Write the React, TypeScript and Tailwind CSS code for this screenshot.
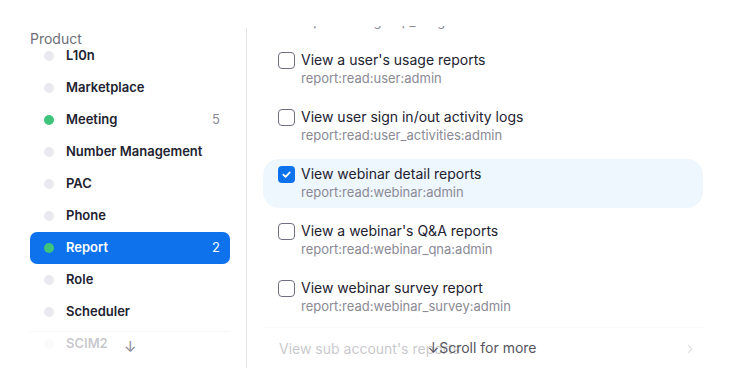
import React from "react";

const sidebarItems: { label: string; active?: boolean; count?: number; selected?: boolean }[] = [
  { label: "L10n" },
  { label: "Marketplace" },
  { label: "Meeting", active: true, count: 5 },
  { label: "Number Management" },
  { label: "PAC" },
  { label: "Phone" },
  { label: "Report", active: true, count: 2, selected: true },
  { label: "Role" },
  { label: "Scheduler" },
  { label: "SCIM2" },
];

const perms: { title: string; scope: string; checked?: boolean }[] = [
  { title: "View a user's operation logs report", scope: "report:read:group_usage:admin" },
  { title: "View a user's usage reports", scope: "report:read:user:admin" },
  { title: "View user sign in/out activity logs", scope: "report:read:user_activities:admin" },
  { title: "View webinar detail reports", scope: "report:read:webinar:admin", checked: true },
  { title: "View a webinar's Q&A reports", scope: "report:read:webinar_qna:admin" },
  { title: "View webinar survey report", scope: "report:read:webinar_survey:admin" },
];

function Checkbox({ checked }: { checked?: boolean }) {
  if (checked) {
    return (
      <div className="w-[17px] h-[17px] rounded-[4px] bg-[#0e72ed] flex items-center justify-center shrink-0 mt-[1px]">
        <svg width="11" height="11" viewBox="0 0 12 12" fill="none">
          <path d="M2.5 6.2 L5 8.6 L9.6 3.6" stroke="white" strokeWidth="1.9" strokeLinecap="round" strokeLinejoin="round" />
        </svg>
      </div>
    );
  }
  return <div className="w-[17px] h-[17px] rounded-[4px] border-[1.5px] border-[#6e7080] bg-white shrink-0 mt-[1px]" />;
}

export default function App() {
  return (
    <div
      className="w-[735px] h-[390px] bg-white flex overflow-hidden relative"
      style={{ fontFamily: "Inter, 'Noto Sans', sans-serif" }}
    >
      {/* Sidebar */}
      <div className="w-[246px] shrink-0 pt-[30px] pl-[30px] pr-[16px] relative flex flex-col">
        <div className="text-[14px] leading-[17px] text-[#6e6e7a] relative z-10">Product</div>
        <div className="h-[322px] overflow-hidden -mt-[7px] flex flex-col shrink-0">
          {sidebarItems.map((it) => (
            <div
              key={it.label}
              className={
                "h-[32px] shrink-0 flex items-center pl-[14px] pr-[10px] rounded-[7px] " +
                (it.selected ? "bg-[#0e72ed] text-white" : "text-[#222230]")
              }
            >
              <span
                className={
                  "w-[10px] h-[10px] rounded-full shrink-0 " +
                  (it.active ? "bg-[#3ec47b]" : "bg-[#e9e9ef]")
                }
              />
              <span className="ml-[12px] text-[13px] font-semibold flex-1">{it.label}</span>
              {it.count !== undefined && (
                <span className={"text-[13px] " + (it.selected ? "text-white" : "text-[#8a8a95]")}>{it.count}</span>
              )}
            </div>
          ))}
        </div>
        {/* fade */}
        <div className="absolute left-[30px] right-[16px] top-[331px] h-[40px] bg-white/75 border-t border-[#f7f7f9] flex justify-start">
          <span className="ml-[94px] mt-[5px] text-[15px] text-[#8a8a95] leading-[20px]">↓</span>
        </div>
      </div>

      {/* Divider */}
      <div className="w-px bg-[#e4e4e8] mt-[28px] h-[340px] shrink-0" />

      {/* Right */}
      <div className="flex-1 pl-[16px] pr-[32px] pt-[26px] relative flex flex-col">
        <div className="h-[344px] overflow-hidden flex flex-col shrink-0">
          <div className="-mt-[38px] flex flex-col gap-[8px] shrink-0">
            {perms.map((p) => (
              <div
                key={p.scope}
                className={
                  "h-[49px] shrink-0 rounded-[16px] pl-[15px] pt-[6px] flex gap-[6px] " +
                  (p.checked ? "bg-[#eef6fe]" : "")
                }
              >
                <Checkbox checked={p.checked} />
                <div className="flex flex-col">
                  <span className="text-[14px] leading-[18px] text-[#222230]">{p.title}</span>
                  <span className="text-[13px] leading-[18px] text-[#8a8a95]">{p.scope}</span>
                </div>
              </div>
            ))}
            <div className="h-[42px] shrink-0 border-t border-[#ececf0] flex items-center pl-[16px] pr-[8px] -mt-[3px]">
              <span className="text-[14px] text-[#222230] flex-1">View sub account's reports</span>
              <svg width="10" height="10" viewBox="0 0 10 10" fill="none">
                <path d="M3.5 1.5 L7 5 L3.5 8.5" stroke="#888" strokeWidth="1.2" strokeLinecap="round" />
              </svg>
            </div>
          </div>
        </div>
        {/* fade overlay */}
        <div className="absolute left-[16px] right-[32px] top-[326px] h-[45px] bg-white/75 flex items-start justify-center pt-[11px]">
          <span className="text-[14px] leading-[22px] text-[#555560] -ml-[2px]">↓Scroll for more</span>
        </div>
      </div>
    </div>
  );
}
